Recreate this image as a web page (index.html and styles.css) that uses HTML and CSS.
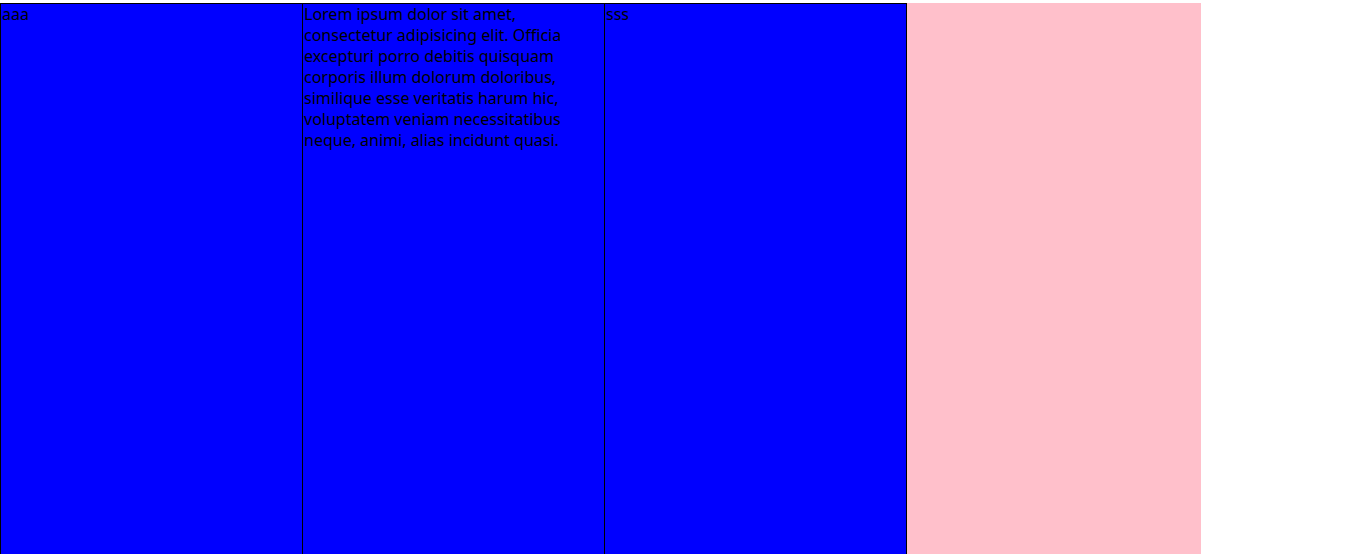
FILE: index.html
```html
<!DOCTYPE html>
<html>
<head>
<meta charset="utf-8">
<link rel="stylesheet" href="styles.css">
</head>
<body>
<div class="box">
  <div class="col">aaa</div>
  <div class="col">Lorem ipsum dolor sit amet, consectetur adipisicing elit. Officia excepturi porro debitis quisquam corporis illum dolorum doloribus, similique esse veritatis harum hic, voluptatem veniam necessitatibus neque, animi, alias incidunt quasi.</div>
  <div class="col">sss</div>
</div>
</body>
</html>
```
FILE: styles.css
```css
html {
  overflow-y: scroll;
}
html::-webkit-scrollbar {
  width: 16px;
  background: #f0f0f0;
}
html::-webkit-scrollbar-thumb {
  background: #c0c0c0;
  border: 2px solid #f0f0f0;
  border-top: 0;
  border-bottom: 0;
}
html::-webkit-scrollbar-button:single-button:vertical:decrement {
  height: 17px;
  display: block;
  background: #f0f0f0 linear-gradient(#f0f0f0, #f0f0f0);
}
html::-webkit-scrollbar-button:single-button:vertical:increment {
  height: 17px;
  display: block;
  background: #f0f0f0;
}
html, body {
  margin: 0;
  padding: 0;
}
body {
  font-family: "Noto Sans", "Open Sans", sans-serif;
  font-size: 16px;
  line-height: 21px;
  color: #000;
}
.box {
  margin-top: 3px;
  width: 1201px;
  height: 16000px;
  background: pink;
  display: flex;
  align-items: stretch;
}
.col {
  box-sizing: border-box;
  width: 303px;
  flex: 0 0 303px;
  margin-right: -1px;
  border: 1px solid #000;
  background: #0000ff;
  padding: 0 1px;
}
```
